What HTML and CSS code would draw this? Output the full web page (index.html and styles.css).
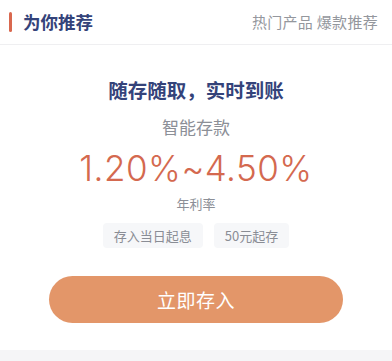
FILE: index.html
```html
<!DOCTYPE html>
<html lang="zh-CN">
<head>
<meta charset="utf-8">
<title>为你推荐</title>
<link rel="stylesheet" href="styles.css">
</head>
<body>
<div class="card">
  <header class="head">
    <div class="head-left">
      <span class="mark"></span>
      <h2 class="title">为你推荐</h2>
    </div>
    <div class="head-right">热门产品 爆款推荐</div>
  </header>
  <section class="product">
    <div class="slogan">随存随取，实时到账</div>
    <div class="name">智能存款</div>
    <div class="rate">1.20%~4.50%</div>
    <div class="rate-label">年利率</div>
    <div class="tags">
      <span class="tag">存入当日起息</span>
      <span class="tag">50元起存</span>
    </div>
    <button class="cta" type="button">立即存入</button>
  </section>
</div>
<div class="band"></div>
</body>
</html>
```
FILE: styles.css
```css
html, body {
  margin: 0;
  padding: 0;
  background: #ffffff;
}
body {
  font-family: "Noto Sans CJK SC", "Noto Sans", sans-serif;
  width: 392px;
  height: 361px;
  overflow: hidden;
}
.card {
  background: #ffffff;
}
.head {
  height: 44px;
  border-bottom: 1px solid #efeff1;
  display: flex;
  align-items: center;
  justify-content: space-between;
  padding: 0 14px 0 9px;
}
.head-left {
  display: flex;
  align-items: center;
}
.mark {
  width: 3px;
  height: 20px;
  border-radius: 1.5px;
  background: #d9684f;
  margin-right: 11px;
}
.title {
  margin: 0;
  font-size: 17.5px;
  font-weight: 700;
  color: #34437a;
  line-height: 24px;
}
.head-right {
  font-size: 15px;
  color: #94979d;
  line-height: 22px;
  letter-spacing: 0.3px;
}
.product {
  display: flex;
  flex-direction: column;
  align-items: center;
  padding-top: 31px;
  padding-bottom: 27px;
}
.slogan {
  font-size: 19.5px;
  font-weight: 700;
  color: #34437a;
  line-height: 27px;
}
.name {
  margin-top: 13px;
  font-size: 17px;
  color: #8c8f97;
  line-height: 22px;
}
.rate {
  margin-top: 10px;
  font-family: Inter, Roboto, sans-serif;
  font-size: 35px;
  font-weight: 300;
  letter-spacing: 0.5px;
  color: #d4694f;
  line-height: 40px;
}
.rate-label {
  margin-top: 7px;
  font-size: 13px;
  color: #8c8f97;
  line-height: 18px;
}
.tags {
  margin-top: 10px;
  display: flex;
  gap: 11px;
}
.tag {
  height: 25px;
  line-height: 25px;
  padding: 0 11px;
  border-radius: 4px;
  background: #f6f7f9;
  font-size: 13px;
  color: #8a8d95;
}
.cta {
  margin-top: 28px;
  width: 294px;
  height: 47px;
  border: none;
  border-radius: 24px;
  background: #e39669;
  color: #ffffff;
  font-family: "Noto Sans CJK SC", "Noto Sans", sans-serif;
  font-size: 19px;
  letter-spacing: 0.5px;
}
.band {
  height: 11px;
  background: #f5f5f7;
}
```
